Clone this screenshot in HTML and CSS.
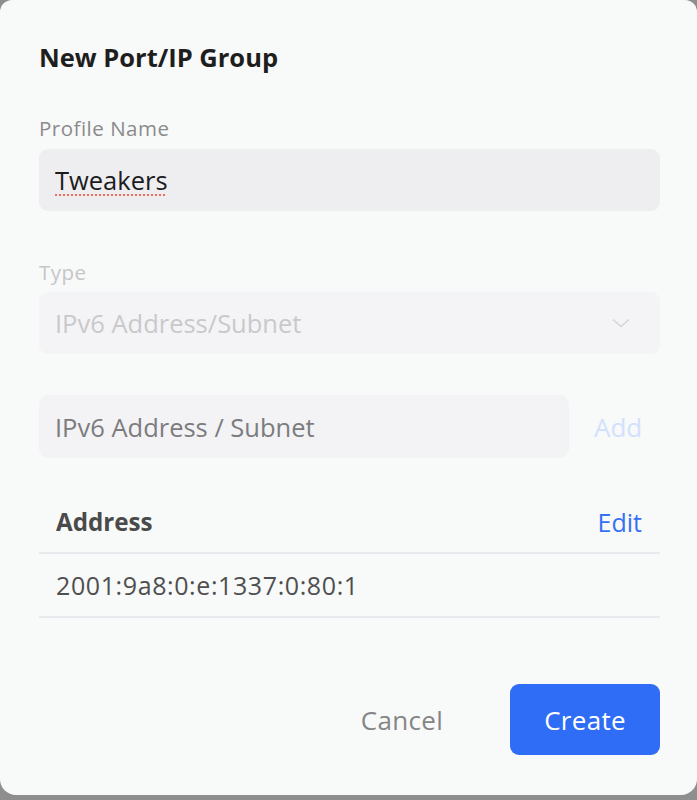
FILE: index.html
```html
<!DOCTYPE html>
<html lang="en">
<head>
<meta charset="utf-8">
<title>New Port/IP Group</title>
<link rel="stylesheet" href="styles.css">
</head>
<body>
<div class="dialog">
  <h1 class="title">New Port/IP Group</h1>

  <div class="label">Profile Name</div>
  <div class="input filled"><span class="spell">Tweakers</span></div>

  <div class="label disabled">Type</div>
  <div class="input select">
    <span>IPv6 Address/Subnet</span>
    <svg class="chev" width="18" height="10" viewBox="0 0 18 10"><path d="M1 1.5 L9 8.5 L17 1.5" fill="none" stroke="#d4d4d8" stroke-width="1.4"/></svg>
  </div>

  <div class="add-row">
    <div class="input addr">IPv6 Address / Subnet</div>
    <span class="add">Add</span>
  </div>

  <div class="table">
    <div class="thead">
      <span class="th">Address</span>
      <span class="edit">Edit</span>
    </div>
    <div class="trow">2001:9a8:0:e:1337:0:80:1</div>
  </div>

  <div class="actions">
    <span class="cancel">Cancel</span>
    <span class="create">Create</span>
  </div>
</div>
</body>
</html>
```

FILE: styles.css
```css
html, body {
  margin: 0;
  padding: 0;
  background: #8e8e8e;
}
body {
  width: 697px;
  height: 800px;
  overflow: hidden;
  font-family: "Open Sans", "Noto Sans", sans-serif;
}
.dialog {
  box-sizing: border-box;
  width: 697px;
  height: 795px;
  background: #f8f9f9;
  border-radius: 12px 12px 16px 16px;
  padding: 42px 37px 0 39px;
}
.title {
  margin: 0;
  font-size: 25.5px;
  line-height: 30px;
  font-weight: 700;
  color: #1e1e1e;
}
.label {
  margin-top: 44px;
  font-size: 20.5px;
  letter-spacing: 0.5px;
  line-height: 24px;
  color: #8b8b8b;
}
.label.disabled {
  margin-top: 49px;
  color: #c6c6c8;
}
.input {
  box-sizing: border-box;
  height: 62px;
  margin-top: 9px;
  border-radius: 9px;
  padding: 0 16px;
  display: flex;
  align-items: center;
  font-size: 25.5px;
}
.filled {
  background: #eeeef0;
  color: #1c1c1e;
}
.spell {
  text-decoration-line: underline;
  text-decoration-style: dotted;
  text-decoration-color: #f26a5e;
  text-decoration-thickness: 2px;
  text-underline-offset: 4px;
}
.select {
  margin-top: 8px;
  background: #f4f4f6;
  color: #c9c9cc;
  justify-content: space-between;
  padding-right: 30px;
}
.chev {
  display: block;
}
.add-row {
  margin-top: 41px;
  display: flex;
  align-items: center;
}
.addr {
  flex: 0 0 530px;
  margin-top: 0;
  height: 63px;
  background: #f3f3f5;
  color: #7c7c7e;
}
.add {
  margin-left: 25px;
  font-size: 26px;
  color: #d3e1fd;
}
.table {
  margin-top: 33px;
}
.thead {
  height: 63px;
  box-sizing: border-box;
  border-bottom: 2px solid #e9e9ed;
  display: flex;
  align-items: center;
  justify-content: space-between;
  padding: 0 18px 0 17px;
}
.th {
  font-size: 24.2px;
  font-weight: 700;
  color: #4a4a4a;
}
.edit {
  font-size: 25px;
  color: #3570f5;
}
.trow {
  height: 64px;
  box-sizing: border-box;
  border-bottom: 2px solid #e9e9ed;
  display: flex;
  align-items: center;
  padding-left: 17px;
  font-size: 25px;
  letter-spacing: 0.6px;
  color: #4f4f4f;
}
.actions {
  margin-top: 66px;
  display: flex;
  justify-content: flex-end;
  align-items: center;
}
.cancel {
  font-size: 26px;
  letter-spacing: 0.3px;
  color: #858585;
  margin-right: 67px;
}
.create {
  box-sizing: border-box;
  width: 150px;
  height: 71px;
  border-radius: 9px;
  background: #2f6df6;
  color: #ffffff;
  font-size: 26px;
  letter-spacing: 0.3px;
  display: flex;
  align-items: center;
  justify-content: center;
}
```
